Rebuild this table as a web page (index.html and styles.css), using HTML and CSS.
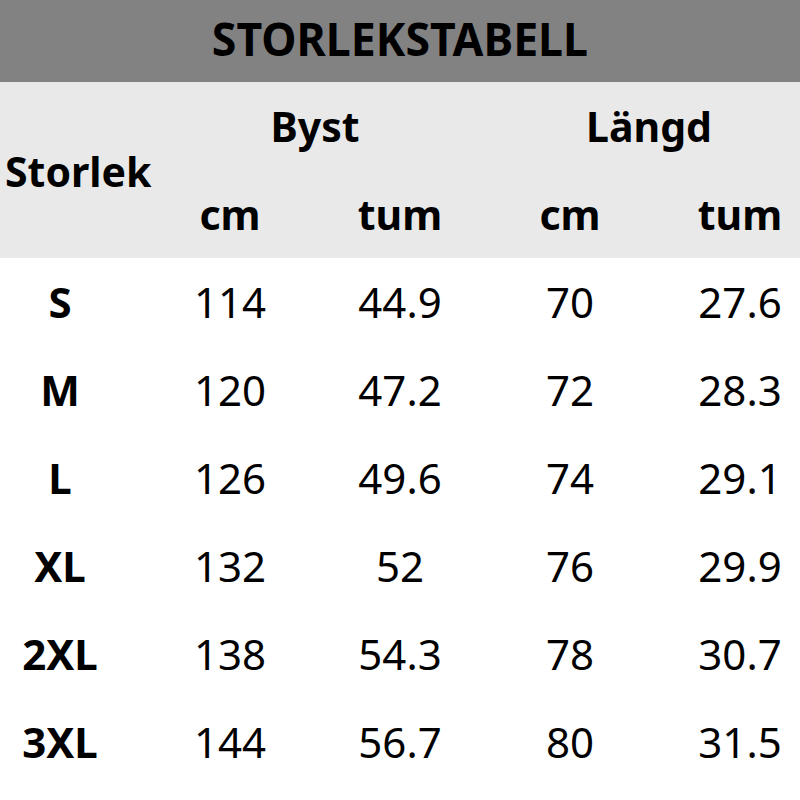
FILE: index.html
```html
<!DOCTYPE html>
<html lang="sv">
<head>
<meta charset="utf-8">
<title>Storlekstabell</title>
<link rel="stylesheet" href="styles.css">
</head>
<body>
<div class="page">
  <div class="title-bar"><span class="title">STORLEKSTABELL</span></div>
  <div class="table">
    <div class="head">
      <div class="h-size">Storlek</div>
      <div class="h-group h-byst">Byst</div>
      <div class="h-group h-langd">Längd</div>
      <div class="h-unit">cm</div>
      <div class="h-unit">tum</div>
      <div class="h-unit">cm</div>
      <div class="h-unit">tum</div>
    </div>
    <div class="body">
      <div class="size">S</div><div class="v">114</div><div class="v">44.9</div><div class="v">70</div><div class="v">27.6</div>
      <div class="size">M</div><div class="v">120</div><div class="v">47.2</div><div class="v">72</div><div class="v">28.3</div>
      <div class="size">L</div><div class="v">126</div><div class="v">49.6</div><div class="v">74</div><div class="v">29.1</div>
      <div class="size">XL</div><div class="v">132</div><div class="v">52</div><div class="v">76</div><div class="v">29.9</div>
      <div class="size">2XL</div><div class="v">138</div><div class="v">54.3</div><div class="v">78</div><div class="v">30.7</div>
      <div class="size">3XL</div><div class="v">144</div><div class="v">56.7</div><div class="v">80</div><div class="v">31.5</div>
    </div>
  </div>
</div>
</body>
</html>
```

FILE: styles.css
```css
html, body {
  margin: 0;
  padding: 0;
  background: #ffffff;
}
.page {
  width: 800px;
  height: 800px;
  overflow: hidden;
  font-family: "Noto Sans", "Open Sans", sans-serif;
  color: #000;
}
.title-bar {
  height: 76px;
  padding-bottom: 6px;
  background: #838283;
  display: flex;
  justify-content: center;
  align-items: center;
}
.title {
  display: inline-block;
  font-size: 46px;
  font-weight: 700;
  line-height: 76px;
  transform: scaleX(0.97);
  white-space: nowrap;
}
.head, .body {
  display: grid;
  width: 825px;
  grid-template-columns: 145px 170px 170px 170px 170px;
}
.head {
  background: #e9e9e9;
  grid-template-rows: 88px 88px;
  font-weight: 700;
  font-size: 41px;
  line-height: 88px;
}
.h-size {
  grid-row: 1 / 3;
  grid-column: 1;
  align-self: center;
  padding-left: 5px;
  line-height: 1;
  padding-top: 2px;
}
.h-byst {
  grid-column: 2 / 4;
  text-align: center;
}
.h-langd {
  grid-column: 4 / 6;
  text-align: center;
  padding-right: 12px;
}
.h-unit {
  text-align: center;
}
.body {
  grid-auto-rows: 88px;
  line-height: 88px;
  font-size: 42px;
}
.size {
  font-weight: 700;
  text-align: center;
  padding-right: 25px;
}
.v {
  text-align: center;
}
```
